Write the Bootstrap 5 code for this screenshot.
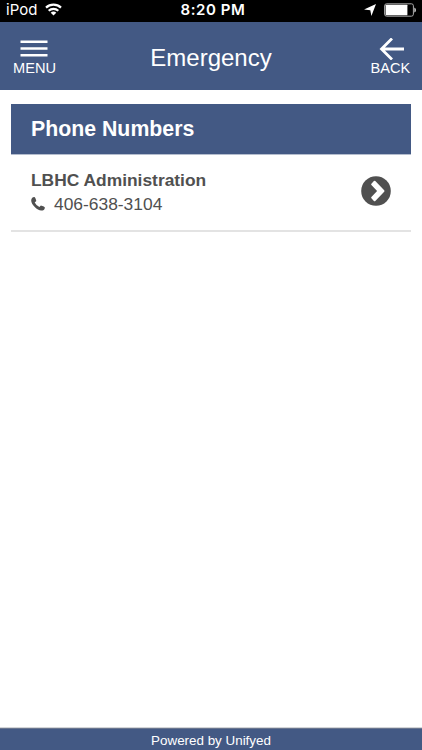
<!DOCTYPE html>
<html lang="en">
<head>
<meta charset="utf-8">
<meta name="viewport" content="width=device-width, initial-scale=1">
<title>Emergency</title>
<link href="https://cdn.jsdelivr.net/npm/bootstrap@5.3.0/dist/css/bootstrap.min.css" rel="stylesheet">
<style>
body{font-family:"Liberation Sans",Arial,sans-serif;height:750px;overflow:hidden;color:#505050}
svg{display:block;flex:none}
.status{height:22px;background:#000;font-family:Inter,Roboto,sans-serif;font-size:15px;line-height:18px;padding:0 6px 3px 6px}
.status-side{flex:1 1 0}
.device{font-size:15px;letter-spacing:0}
.clock{font-size:15px;font-weight:600;letter-spacing:.6px;padding-left:4px}
.brand{background:#435984}
.topbar{height:68px;padding:0 10px 0 13px}
.topbar-action{width:43px;font-size:14.6px;line-height:16px;padding-top:16px}
.topbar-action svg{height:22px}
.menu-lines{margin-right:2px}
.back-arrow{margin-left:3px}
.topbar h1{font-size:24px;line-height:28px;padding:4px 3px 0 0}
.content{padding:14px 11px 0}
.section-title{height:51px;font-size:21.3px;line-height:50px;padding-left:20px;border-bottom:1px solid #b4bdce}
.entry{height:77px;padding:13px 20px 0 20px;border-bottom:2px solid #e3e3e3;font-size:17.4px;line-height:24px}
.number{margin-left:9px}
.go{margin-top:8px}
.footer-bar{height:22px;font-size:13.4px;line-height:23px;border-top:1px solid #69758f;box-shadow:0 -1px #d3d5d8}
</style>
<script src="https://cdn.jsdelivr.net/npm/bootstrap@5.3.0/dist/js/bootstrap.bundle.min.js"></script>
</head>
<body class="d-flex flex-column bg-white">
<div class="status d-flex align-items-center text-white">
  <div class="status-side d-flex align-items-center">
    <span class="device">iPod</span>
    <svg class="ms-2" width="17" height="13" viewBox="0 0 17 13" fill="none" stroke="#fff" stroke-width="2.200"><path d="M1 4.600C5.200.600 11.800.600 16 4.600M3.700 7.700C6.400 5.200 10.600 5.200 13.300 7.700"/><path d="M5.700 9.700C7.400 8.100 9.600 8.100 11.300 9.700L8.500 12.600Z" fill="#fff" stroke="none"/></svg>
  </div>
  <span class="clock">8:20 PM</span>
  <div class="status-side d-flex align-items-center justify-content-end">
    <svg class="me-2" width="12" height="12" viewBox="0 0 12 12"><path d="M12 0 7.400 12 6.300 6.200 0 5.600Z" fill="#fff"/></svg>
    <svg width="32" height="14" viewBox="0 0 32 14"><rect x=".6" y=".8" width="28.800" height="12.400" rx="2" fill="none" stroke="#aaa" stroke-width="1"/><rect x="1.600" y="1.800" width="21.800" height="10.400" rx=".5" fill="#fff"/><path d="M30.300 4.500Q32 5 32 7T30.300 9.500Z" fill="#ccc"/></svg>
  </div>
</div>
<header class="topbar brand d-flex justify-content-between text-white">
  <a href="#" class="topbar-action text-white text-decoration-none d-flex flex-column align-items-center">
    <svg class="menu-lines" width="28" height="22" viewBox="0 0 28 22"><path d="M.5 3.700h27M.5 10.500h27M.5 17.300h27" stroke="#fff" stroke-width="2.500"/></svg>
    <span>MENU</span>
  </a>
  <h1 class="fw-normal mb-0 align-self-center">Emergency</h1>
  <a href="#" class="topbar-action text-white text-decoration-none d-flex flex-column align-items-center">
    <svg class="back-arrow" width="26" height="22" viewBox="0 0 26 22"><path d="M13 .5 2.500 11 13 21.500M3 11H25" fill="none" stroke="#fff" stroke-width="2.800"/></svg>
    <span>BACK</span>
  </a>
</header>
<main class="content flex-grow-1">
  <h2 class="section-title brand text-white fw-bold mb-0">Phone Numbers</h2>
  <div class="entry d-flex justify-content-between">
    <div>
      <div class="fw-bold">LBHC Administration</div>
      <div class="d-flex align-items-center"><svg width="14" height="14" viewBox="0 0 14 14"><path d="M3.300 0Q4.300 0 5.300 4L3.700 5.600Q5.200 8.600 8.400 10.100L9.900 8.500Q13.700 9.500 13.900 10.400C13.700 12.600 12.300 13.600 10.200 13.600C6.300 13.200.400 7.800.200 3.700C.200 1.500 1.400.100 3.300 0Z" fill="#505050"/></svg><span class="number">406-638-3104</span></div>
    </div>
    <svg class="go" width="30" height="30" viewBox="0 0 30 30"><circle cx="15" cy="15" r="14.800" fill="#505050"/><path d="m10.400 7.700 2.500-2.600q.7-.6 1.400 0l8.900 9.200q.6.700 0 1.400l-8.900 9.200q-.7.600-1.400 0l-2.500-2.600q-.6-.7 0-1.400l5.700-5.900-5.700-5.900q-.6-.7 0-1.400Z" fill="#fff"/></svg>
  </div>
</main>
<footer class="footer-bar brand text-white text-center">Powered by Unifyed</footer>
</body>
</html>
